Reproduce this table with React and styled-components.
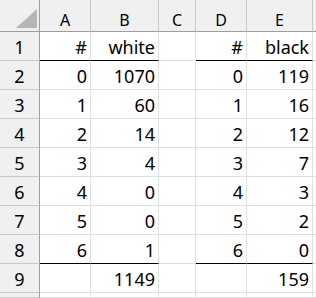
import React from "react";
import styled, { createGlobalStyle } from "styled-components";

const Global = createGlobalStyle`
  html, body { margin: 0; padding: 0; background: #ffffff; overflow: hidden; }
  * { box-sizing: border-box; }
`;

const HEAD_BG = "#f0f0f0";
const HEAD_EDGE = "#9e9e9e";
const HEAD_SEP = "#c8c8c8";
const GRID = "#e0e0e0";

const Sheet = styled.div`
  display: grid;
  grid-template-columns: 40px 51px 68px 37px 51px 66px 1fr;
  grid-template-rows: 32px repeat(9, 29px) 1fr;
  width: 100vw;
  height: 100vh;
  overflow: hidden;
  font-family: "Noto Sans", "Open Sans", sans-serif;
  color: #000;
`;

const Corner = styled.div`
  background: ${HEAD_BG};
  border-right: 1px solid ${HEAD_EDGE};
  border-bottom: 1px solid ${HEAD_EDGE};
  display: flex;
  justify-content: flex-end;
  align-items: flex-end;
  padding: 0 2px 3px 0;
`;

const Triangle = styled.div`
  width: 21px;
  height: 19px;
  background: #b6b6b6;
  clip-path: polygon(100% 0, 100% 100%, 0 100%);
`;

const ColHead = styled.div`
  background: ${HEAD_BG};
  border-right: 1px solid ${HEAD_SEP};
  border-bottom: 1px solid ${HEAD_EDGE};
  display: flex;
  align-items: flex-end;
  justify-content: center;
  font-size: 16px;
  line-height: 22px;
`;

const RowHead = styled.div`
  background: ${HEAD_BG};
  border-right: 1px solid ${HEAD_EDGE};
  border-bottom: 1px solid ${HEAD_SEP};
  display: flex;
  align-items: flex-end;
  justify-content: center;
  font-size: 18px;
  line-height: 24px;
  padding-bottom: 1px;
`;

const Cell = styled.div`
  border-right: 1px solid ${GRID};
  border-bottom: 1px solid ${(p) => (p.$rule ? "#000" : GRID)};
  display: flex;
  align-items: flex-end;
  justify-content: flex-end;
  font-size: 18px;
  line-height: 24px;
  padding: 0 3px 1px 0;
  white-space: nowrap;
`;

const cols = ["A", "B", "C", "D", "E", ""];
const white = [1070, 60, 14, 4, 0, 0, 1];
const black = [119, 16, 12, 7, 3, 2, 0];

const rows = [
  ["#", "white", "", "#", "black", ""],
  ...white.map((w, i) => [String(i), String(w), "", String(i), String(black[i]), ""]),
  ["", "1149", "", "", "159", ""],
];

const ruled = (r, c) => (r === 0 || r === 7) && [0, 1, 3, 4].includes(c);

export default function App() {
  return (
    <>
      <Global />
      <Sheet>
        <Corner>
          <Triangle />
        </Corner>
        {cols.map((c, i) => (
          <ColHead key={i}>{c}</ColHead>
        ))}
        {rows.map((row, r) => (
          <React.Fragment key={r}>
            <RowHead>{r + 1}</RowHead>
            {row.map((v, c) => (
              <Cell key={c} $rule={ruled(r, c)}>
                {v}
              </Cell>
            ))}
          </React.Fragment>
        ))}
        <RowHead />
        {cols.map((_, c) => (
          <Cell key={`t${c}`} />
        ))}
      </Sheet>
    </>
  );
}
